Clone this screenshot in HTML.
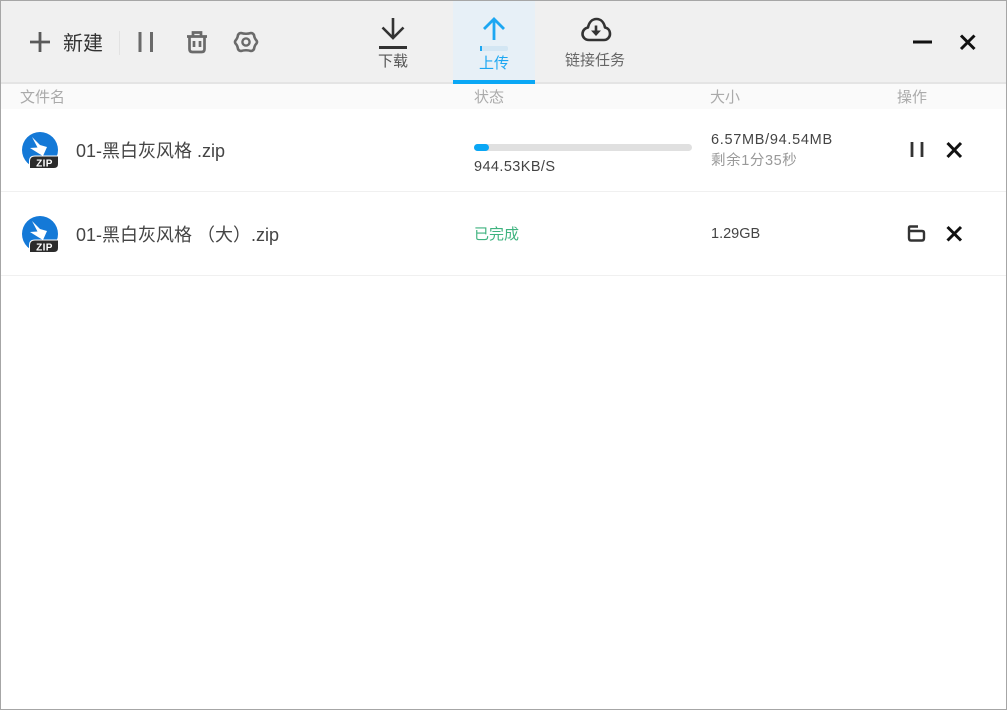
<!DOCTYPE html>
<html lang="zh"><head><meta charset="utf-8"><title>传输</title>
<style>
html,body{margin:0;padding:0;background:#fff}
#a{position:relative;width:1007px;height:710px;overflow:hidden;background:#fff;font-family:"Liberation Sans","Noto Sans CJK SC",sans-serif;color:#333}
#a>*{position:absolute}
.t{white-space:nowrap;line-height:20px;height:20px}
svg{overflow:visible}
</style></head><body><div id="a">
<div style="left:0;top:0;width:1007px;height:82px;background:#f0f0f0"></div>
<div style="left:0;top:82px;width:1007px;height:2px;background:#e4e4e4"></div>
<div style="left:0;top:84px;width:1007px;height:25px;background:#fafafa"></div>
<div style="left:453px;top:0;width:82px;height:80px;background:#e7f0f7"></div>
<div style="left:453px;top:80px;width:82px;height:4px;background:#0aa7f5"></div>

<svg style="left:0;top:0" width="300" height="82" fill="none">
<path d="M40 32V52M30 42H50" stroke="#5a5a5a" stroke-width="2.800"/>
<path d="M119.500 31V55" stroke="#e2e2e2"/>
<path d="M140 32V52M151.500 32V52" stroke="#6a6a6a" stroke-width="3"/>
<path d="M187 36.500H207M193 36V32.500H201V36M189.500 37V49Q189.500 52 192.500 52H201.500Q204.500 52 204.500 49V37M194 41V47M200 41V47" stroke="#6a6a6a" stroke-width="2.700"/>
<path d="M241 33Q246 34.500 251 33Q253 33 254 35Q254.500 38.500 256.500 40.500Q257.500 42 256.500 43.500Q254.500 45.500 254 49Q253 51 251 51Q246 49.500 241 51Q239 51 238 49Q237.500 45.500 235.500 43.500Q234.500 42 235.500 40.500Q237.500 38.500 238 35Q239 33 241 33Z" stroke="#6a6a6a" stroke-width="2.600" stroke-linejoin="round"/>
<circle cx="246" cy="42" r="3.600" stroke="#6a6a6a" stroke-width="2.400"/>
</svg>
<div class="t" style="left:63px;top:34px;font-size:20px;color:#333">新建</div>

<svg style="left:370px;top:10px" width="250" height="60" fill="none">
<path d="M23 8V28M12.500 17.500L23 28L33.500 17.500" stroke="#333" stroke-width="2.600"/>
<rect x="9" y="36" width="28" height="3" fill="#333"/>
<path d="M124 9V30M114 19L124 9L134 19" stroke="#1ca7f2" stroke-width="2.800"/>
<rect x="110" y="36" width="28" height="5" rx="2" fill="#d3e6f3"/>
<rect x="110" y="36" width="2" height="5" fill="#1ca7f2"/>
<path d="M219 30C215 30 212.500 27 212.500 24C212.500 20.500 215 18 218 17.500C219 12.500 222 9 226.500 9C231 9 234 12.500 235 17.500C238 18 240 20.500 240 24C240 27 237.500 30 234 30Z" stroke="#333" stroke-width="2.600" stroke-linejoin="round"/>
<path d="M226 15.500V22" stroke="#333" stroke-width="2.600"/>
<path d="M221 20.500H231L226 26Z" fill="#333"/>
</svg>
<div class="t" style="left:378px;top:52px;font-size:15px;color:#555">下载</div>
<div class="t" style="left:479px;top:54px;font-size:15px;color:#1ca7f2">上传</div>
<div class="t" style="left:565px;top:51px;font-size:15px;color:#666">链接任务</div>

<svg style="left:900px;top:20px" width="90" height="45" fill="none">
<path d="M13 22H32" stroke="#111" stroke-width="3"/>
<path d="M61 15.500L74.500 29M74.500 15.500L61 29" stroke="#111" stroke-width="3"/>
</svg>

<div class="t" style="left:20px;top:88px;font-size:15px;color:#aaa">文件名</div>
<div class="t" style="left:474px;top:88px;font-size:15px;color:#aaa">状态</div>
<div class="t" style="left:710px;top:88px;font-size:15px;color:#aaa">大小</div>
<div class="t" style="left:897px;top:88px;font-size:15px;color:#aaa">操作</div>

<div style="left:0;top:191px;width:1007px;height:1px;background:#f0f0f0"></div>
<div style="left:0;top:275px;width:1007px;height:1px;background:#f0f0f0"></div>

<svg style="left:20px;top:130px" width="40" height="40">
<circle cx="20" cy="20" r="18" fill="#1479d7"/>
<path d="M12 7L20 15L27 17L23 26L18 23L10 18L17.500 17.500Z" fill="#fff"/>
<path d="M9.500 38.500V31Q9.500 26 15 26H38.500V34Q38.500 38.500 34 38.500Z" fill="#2b2b2b" stroke="#fff" stroke-width="1"/>
<text x="24.500" y="36.300" font-size="10" font-weight="bold" letter-spacing=".4" fill="#fff" text-anchor="middle" font-family="Liberation Sans">ZIP</text>
</svg>
<svg style="left:20px;top:214px" width="40" height="40">
<circle cx="20" cy="20" r="18" fill="#1479d7"/>
<path d="M12 7L20 15L27 17L23 26L18 23L10 18L17.500 17.500Z" fill="#fff"/>
<path d="M9.500 38.500V31Q9.500 26 15 26H38.500V34Q38.500 38.500 34 38.500Z" fill="#2b2b2b" stroke="#fff" stroke-width="1"/>
<text x="24.500" y="36.300" font-size="10" font-weight="bold" letter-spacing=".4" fill="#fff" text-anchor="middle" font-family="Liberation Sans">ZIP</text>
</svg>

<div class="t" style="left:76px;top:141px;font-size:18px;color:#444">01-黑白灰风格 .zip</div>
<div class="t" style="left:76px;top:225px;font-size:18px;color:#444">01-黑白灰风格 （大）.zip</div>

<div style="left:474px;top:144px;width:218px;height:7px;border-radius:4px;background:#e0e0e0"></div>
<div style="left:474px;top:144px;width:15px;height:7px;border-radius:4px;background:#0aa7f5"></div>
<div class="t" style="left:474px;top:157px;font-size:14.500px;letter-spacing:.4px;color:#444">944.53KB/S</div>
<div class="t" style="left:474px;top:225px;font-size:15px;color:#3fb37f">已完成</div>

<div class="t" style="left:711px;top:130px;font-size:14.500px;letter-spacing:.7px;color:#444">6.57MB/94.54MB</div>
<div class="t" style="left:711px;top:151px;font-size:14.500px;letter-spacing:.6px;color:#999">剩余1分35秒</div>
<div class="t" style="left:711px;top:224px;font-size:14.500px;color:#444">1.29GB</div>

<svg style="left:900px;top:135px" width="70" height="115" fill="none">
<path d="M12 7V22M22 7V22" stroke="#333" stroke-width="2.800"/>
<path d="M47.500 8L61 22M61 8L47.500 22" stroke="#111" stroke-width="3"/>
<path d="M18 91.500H10.500Q9 91.500 9 93V103Q9 105.500 11 105.500H22Q24 105.500 24 103V98Q24 96 22 96H9" stroke="#333" stroke-width="2.400"/>
<path d="M47.500 92L61 105.500M61 92L47.500 105.500" stroke="#111" stroke-width="3"/>
</svg>

<div style="left:0;top:0;width:1005px;height:708px;border:1px solid #a6a6a6"></div>
</div></body></html>
